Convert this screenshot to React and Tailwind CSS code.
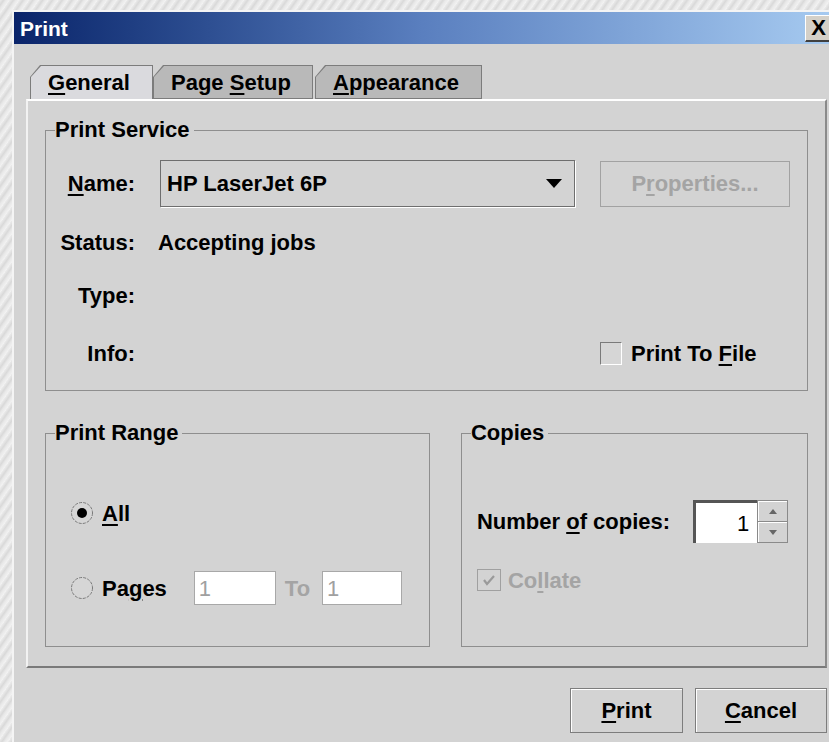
import React from 'react';

// mnemonic letter, underlined the way Swing draws it
function Mn({ children }) {
  return <span className="underline decoration-2 underline-offset-[3px]">{children}</span>;
}

function Tab({ selected, className, children }) {
  return (
    <div
      className={`h-[34px] p-[1px] ${selected ? 'pb-0' : ''} bg-[#7c7c7c] [clip-path:polygon(0_12px,10px_0,100%_0,100%_100%,0_100%)] ${className}`}
    >
      <div
        className={`h-full flex items-center pl-[17px] [clip-path:polygon(0_11px,10px_0,100%_0,100%_100%,0_100%)] ${
          selected ? 'bg-[#dadade]' : 'bg-[#b9b9b9]'
        }`}
      >
        <span className="whitespace-pre">{children}</span>
      </div>
    </div>
  );
}

function Group({ title, className, children }) {
  return (
    <fieldset className={`border border-[#8e8e8e] ${className}`}>
      <legend className="ml-[9px] pr-[4px] leading-[24px]">{title}</legend>
      {children}
    </fieldset>
  );
}

function Radio({ checked }) {
  return (
    <svg width="24" height="24" viewBox="0 0 24 24" className="shrink-0">
      <circle cx="12" cy="12" r="10.5" fill="#d6d6d6" stroke="#7a7a7a" strokeWidth="1" strokeDasharray="3 1.2" />
      {checked && <circle cx="12" cy="12" r="5" fill="#000" />}
    </svg>
  );
}

function Button({ className, children }) {
  return (
    <button className={`h-[45px] border border-[#7d7d7d] shadow-[inset_1px_1px_0_#ffffff] bg-[#d3d3d3] flex items-center justify-center ${className}`}>
      <span>{children}</span>
    </button>
  );
}

export default function App() {
  return (
    <div className="w-[829px] h-[742px] overflow-hidden pl-[12px] pt-[10px] bg-[#e2e2e2] bg-[repeating-linear-gradient(125deg,#ececec_0px,#d9d9d9_3px,#e8e8e8_5px,#f2f2f2_8px)] font-['Liberation_Sans',Arial,sans-serif] font-bold text-[22px] text-black">
      <div className="w-[819px] h-[740px] bg-[#d3d3d3] border-t-2 border-l-2 border-[#f4f4f4] flex flex-col">
        {/* title bar */}
        <div className="h-[32px] shrink-0 flex bg-gradient-to-r from-[#0a246a] via-[#5a7fbf] to-[#a6caf0]">
          <span className="pl-[6px] self-center text-white text-[21px] leading-none">Print</span>
          <div className="ml-auto mt-[3px] w-[26px] h-[27px] bg-[#d4d0c8] border-t border-l border-white border-b-2 border-b-[#404040] flex items-center justify-center text-[22px] leading-none">
            X
          </div>
        </div>

        {/* tabs */}
        <div className="mt-[21px] ml-[16px] flex">
          <Tab selected className="w-[123px]">
            <Mn>G</Mn>eneral
          </Tab>
          <Tab className="w-[160px]">
            Page <Mn>S</Mn>etup
          </Tab>
          <Tab className="w-[167px] ml-[2px]">
            <Mn>A</Mn>ppearance
          </Tab>
        </div>

        {/* tab panel */}
        <div className="ml-[12px] w-[801px] h-[569px] border-2 border-t-white border-l-[#f2f2f2] border-r-[#8a8a8a] border-b-[#7a7a7a] px-[17px] pt-[17px]">
          <Group title="Print Service" className="w-[763px] h-[273px]">
            <div className="mt-[18px] h-[47px] flex items-center">
              <div className="w-[89px] text-right"><Mn>N</Mn>ame:</div>
              <div className="ml-[25px] w-[415px] h-[47px] border border-[#6e6e6e] shadow-[1px_1px_0_#ffffff] flex items-center pl-[6px] pr-[12px]">
                <span>HP LaserJet 6P</span>
                <svg width="16" height="9" viewBox="0 0 16 9" className="ml-auto">
                  <path d="M0 0H16L8 9Z" fill="#000" />
                </svg>
              </div>
              <div className="ml-[25px] w-[190px] h-[46px] border border-[#a2a2a2] flex items-center justify-center text-[#a4a4a4]">
                <span>P<Mn>r</Mn>operties...</span>
              </div>
            </div>
            <div className="mt-[20px] h-[30px] flex items-center">
              <div className="w-[89px] text-right">Status:</div>
              <div className="ml-[23px]">Accepting jobs</div>
            </div>
            <div className="mt-[23px] h-[30px] flex items-center">
              <div className="w-[89px] text-right">Type:</div>
            </div>
            <div className="mt-[28px] h-[30px] flex items-center">
              <div className="w-[89px] text-right">Info:</div>
              <div className="ml-[465px] flex items-center">
                <div className="w-[22px] h-[23px] border border-t-[#7a7a7a] border-l-[#7a7a7a] border-r-white border-b-white bg-[#d6d6d6]" />
                <span className="ml-[9px]">
                  Print To <Mn>F</Mn>ile
                </span>
              </div>
            </div>
          </Group>

          <div className="mt-[30px] flex gap-[31px]">
            <Group title="Print Range" className="w-[386px] h-[226px]">
              <div className="mt-[51px] h-[34px] ml-[24px] flex items-center">
                <Radio checked />
                <span className="ml-[8px]">
                  <Mn>A</Mn>ll
                </span>
              </div>
              <div className="mt-[41px] h-[34px] ml-[24px] flex items-center">
                <Radio />
                <span className="ml-[8px]">
                  Pa<Mn>g</Mn>es
                </span>
                <div className="ml-[27px] w-[82px] h-[34px] bg-white border border-[#a8a8a8] pl-[4px] flex items-center font-normal text-[#a0a0a0]">
                  1
                </div>
                <span className="ml-[9px] text-[#a4a4a4]">To</span>
                <div className="ml-[12px] w-[80px] h-[34px] bg-white border border-[#a8a8a8] pl-[4px] flex items-center font-normal text-[#a0a0a0]">
                  1
                </div>
              </div>
            </Group>

            <Group title="Copies" className="w-[348px] h-[226px]">
              <div className="mt-[55px] h-[43px] ml-[15px] flex items-center">
                <span>
                  Number <Mn>o</Mn>f copies:
                </span>
                <div className="ml-[23px] w-[64px] h-[43px] bg-white border-t-[3px] border-l-[3px] border-t-[#555] border-l-[#555] flex items-center justify-end pr-[8px] font-normal">
                  1
                </div>
                <div className="w-[31px] h-[43px] flex flex-col">
                  <div className="flex-1 bg-[#d3d3d3] border border-[#8a8a8a] shadow-[inset_1px_1px_0_#ffffff] flex items-center justify-center">
                    <svg width="8" height="5" viewBox="0 0 8 5"><path d="M4 0L8 5H0Z" fill="#666" /></svg>
                  </div>
                  <div className="flex-1 bg-[#d3d3d3] border border-t-0 border-[#8a8a8a] shadow-[inset_1px_1px_0_#ffffff] flex items-center justify-center">
                    <svg width="8" height="5" viewBox="0 0 8 5"><path d="M0 0H8L4 5Z" fill="#666" /></svg>
                  </div>
                </div>
              </div>
              <div className="mt-[25px] h-[24px] ml-[15px] flex items-center text-[#a4a4a4]">
                <div className="w-[24px] h-[22px] border border-[#a0a0a0] flex items-center justify-center">
                  <svg width="14" height="12" viewBox="0 0 14 12">
                    <path d="M2 6L5 10L12 2" stroke="#9a9a9a" strokeWidth="2.2" fill="none" />
                  </svg>
                </div>
                <span className="ml-[7px]">
                  Co<Mn>l</Mn>late
                </span>
              </div>
            </Group>
          </div>
        </div>

        {/* dialog buttons */}
        <div className="mt-[20px] flex justify-end gap-[12px] pr-[4px]">
          <Button className="w-[113px]">
            <Mn>P</Mn>rint
          </Button>
          <Button className="w-[132px]">
            <Mn>C</Mn>ancel
          </Button>
        </div>
      </div>
    </div>
  );
}
